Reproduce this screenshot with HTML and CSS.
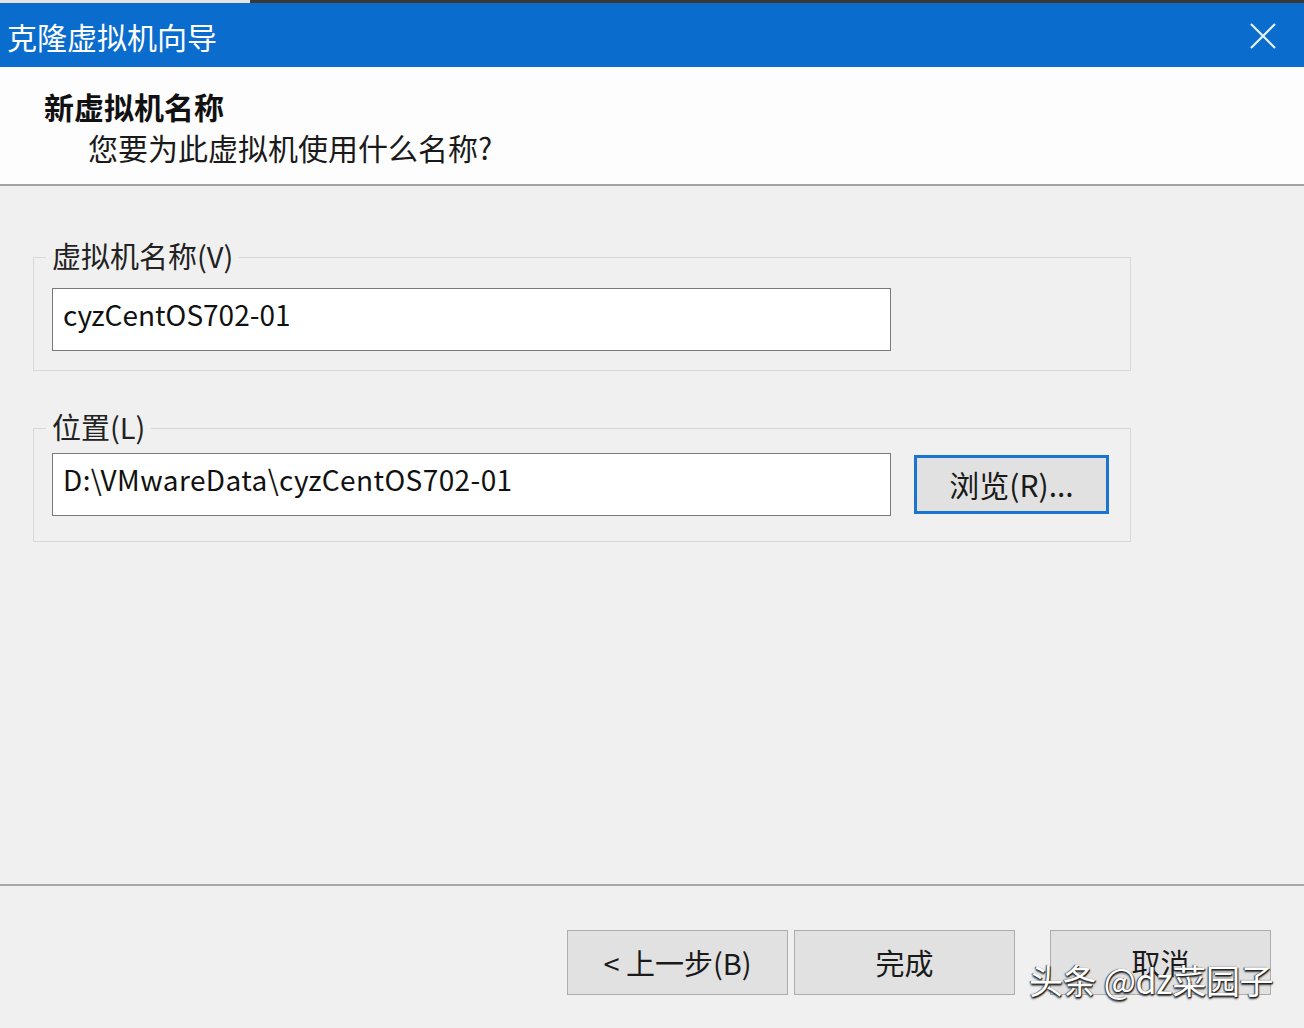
FILE: index.html
```html
<!DOCTYPE html>
<html lang="zh-CN">
<head>
    <meta charset="UTF-8">
    <meta name="viewport" content="width=device-width, initial-scale=1.0">
    <title>克隆虚拟机向导</title>
    <link rel="stylesheet" href="styles.css">
</head>
<body>
    <div class="top-strip">
        <div class="strip-light"></div>
        <div class="strip-dark"></div>
    </div>

    <div class="title-bar">
        <span class="title-text">克隆虚拟机向导</span>
        <svg class="close-icon" width="26" height="26" viewBox="0 0 26 26">
            <path d="M1 1 L25 25 M25 1 L1 25" stroke="#e6f2ff" stroke-width="2.2" fill="none"/>
        </svg>
    </div>

    <div class="header">
        <div class="header-title">新虚拟机名称</div>
        <div class="header-sub">您要为此虚拟机使用什么名称?</div>
    </div>

    <div class="content">
        <div class="group group-name">
            <div class="group-label">虚拟机名称(V)</div>
            <div class="group-row">
                <div class="text-field">cyzCentOS702-01</div>
            </div>
        </div>

        <div class="group group-location">
            <div class="group-label">位置(L)</div>
            <div class="group-row">
                <div class="text-field path-field">D:\VMwareData\cyzCentOS702-01</div>
                <button class="btn btn-browse">浏览(R)...</button>
            </div>
        </div>
    </div>

    <div class="footer">
        <div class="footer-buttons">
            <button class="btn btn-nav">&lt; 上一步(B)</button>
            <button class="btn btn-nav">完成</button>
            <button class="btn btn-nav btn-cancel">取消</button>
        </div>
        <div class="watermark">头条 @dz菜园子</div>
    </div>
</body>
</html>
```

FILE: styles.css
```css
body {
    margin: 0;
    font-family: "Noto Sans CJK SC", "Noto Sans", sans-serif;
    background-color: #f0f0f0;
    color: #1a1a1a;
    width: 1304px;
    height: 1028px;
    overflow: hidden;
}

.top-strip {
    display: flex;
    height: 3px;
}

.strip-light {
    width: 250px;
    background-color: #e4e4e4;
}

.strip-dark {
    flex: 1;
    background-color: #3b3833;
}

.title-bar {
    height: 64px;
    background-color: #0a6ccd;
    display: flex;
    align-items: center;
    justify-content: space-between;
    padding: 0 28px 0 7px;
}

.title-text {
    color: white;
    font-size: 30px;
    line-height: 40px;
    margin-top: 2px;
}

.close-icon {
    display: block;
    margin-top: 1px;
}

.header {
    background-color: #fdfdfd;
    height: 98px;
    padding: 19px 0 0 44px;
    border-bottom: 2px solid #a3a3a3;
}

.header-title {
    font-size: 30px;
    font-weight: bold;
    line-height: 40px;
    color: #111;
}

.header-sub {
    font-size: 30px;
    line-height: 40px;
    padding-left: 44px;
    margin-top: 1px;
}

.content {
    height: 700px;
    padding: 71px 0 0 33px;
    box-sizing: border-box;
    border-bottom: 2px solid #a8a8a8;
}

.group {
    width: 1098px;
    box-sizing: border-box;
    border: 1px solid #d8d8d8;
    padding: 0 18px;
}

.group-name {
    padding-bottom: 19px;
}

.group-location {
    margin-top: 57px;
    padding-bottom: 25px;
}

.group-label {
    display: block;
    width: max-content;
    font-size: 29px;
    line-height: 36px;
    margin: -21px 0 0 -6px;
    padding: 0 6px;
    background-color: #f0f0f0;
    color: #222;
}

.group-name .group-label {
    margin-bottom: 15px;
}

.group-location .group-label {
    margin-bottom: 9px;
}

.group-row {
    display: flex;
    align-items: center;
}

.text-field {
    width: 839px;
    height: 63px;
    box-sizing: border-box;
    border: 1px solid #7a7a7a;
    background-color: white;
    font-size: 28px;
    line-height: 36px;
    padding: 7px 10px 0;
    color: #111;
}

.path-field {
    letter-spacing: 0.4px;
}

.btn {
    font-family: "Noto Sans CJK SC", "Noto Sans", sans-serif;
    font-size: 29px;
    line-height: 58px;
    color: #1a1a1a;
    background-color: #e1e1e1;
    border: 1px solid #adadad;
    padding: 0 0 2px;
    margin: 0;
}

.btn-browse {
    width: 195px;
    height: 59px;
    margin-left: 23px;
    border: 3px solid #1b74d2;
    font-size: 30px;
    line-height: 50px;
}

.footer {
    position: relative;
    height: 142px;
}

.footer-buttons {
    display: flex;
    justify-content: flex-end;
    padding: 44px 33px 0 0;
}

.btn-nav {
    width: 221px;
    height: 65px;
    margin-left: 6px;
}

.btn-cancel {
    margin-left: 35px;
}

.watermark {
    position: absolute;
    left: 1029px;
    top: 72px;
    font-size: 34px;
    line-height: 44px;
    color: white;
    letter-spacing: -0.3px;
    text-shadow: 1px 1px 1px #222, -1px 0 1px #444, 0 2px 2px #333;
}
```
